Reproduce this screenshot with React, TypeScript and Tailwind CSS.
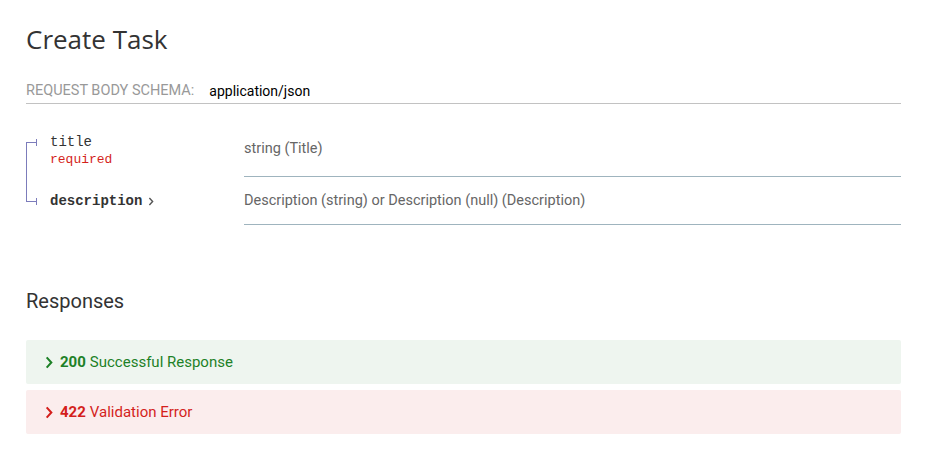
const fields = [
  { name: "title", required: true, type: "string (Title)", expandable: false, tick: 14 },
  {
    name: "description",
    required: false,
    type: "Description (string) or Description (null) (Description)",
    expandable: true,
    tick: 24,
  },
];

const responses = [
  { code: "200", label: "Successful Response", tone: "text-[#1d8127] bg-[#eef5ef]" },
  { code: "422", label: "Validation Error", tone: "text-[#d41f1c] bg-[#fbeded]" },
];

const Chevron = ({ className }: { className?: string }) => (
  <svg viewBox="0 0 8 14" className={className} fill="none" stroke="currentColor" strokeWidth={2.2}>
    <polyline points="1.5,1.5 6.5,7 1.5,12.5" />
  </svg>
);

const Connector = ({ first, last, tick }: { first: boolean; last: boolean; tick: number }) => (
  <span className="relative inline-block w-[24px] self-stretch shrink-0">
    {/* tree line, cut at the first and last row */}
    <span
      className="absolute left-0 w-px bg-[#7c7cbb]"
      style={{ top: first ? tick : 0, ...(last ? { height: tick + 1 } : { bottom: 0 }) }}
    />
    <span className="absolute left-0 w-[10px] h-px bg-[#7c7cbb]" style={{ top: tick }} />
    <span className="absolute left-[10px] w-px h-[7px] bg-[#7c7cbb]" style={{ top: tick - 3 }} />
  </span>
);

export default function App() {
  return (
    <div className="w-[937px] h-[476px] bg-white font-['Roboto',sans-serif] text-[14.5px] text-[#333]">
      <div className="pl-[26px] pr-[36px] pt-[22px]">
        <h2 className="font-['Open_Sans',sans-serif] text-[26px] leading-[34px] text-[#333] font-normal">
          Create Task
        </h2>

        <div className="mt-[24px] flex items-center h-[22px] border-b border-[#c2c2c2] pb-[1px] box-content">
          <span className="text-[#999] uppercase">Request Body schema:</span>
          <span className="ml-[15px] text-[14px] text-black">application/json</span>
        </div>

        <div className="mt-[24px]">
          {fields.map((f, i) => {
            const first = i === 0;
            const last = i === fields.length - 1;
            return (
              <div key={f.name} className="flex">
                <div className="w-[218px] shrink-0 flex">
                  <Connector first={first} last={last} tick={f.tick} />
                  <div className={`flex flex-col ${first ? "pt-[4px]" : "pt-[14px]"}`}>
                    <span
                      className={`font-['Liberation_Mono',monospace] text-[14px] leading-[20px] text-[#333] flex items-center ${
                        f.expandable ? "font-bold" : ""
                      }`}
                    >
                      {f.name}
                      {f.expandable && <Chevron className="ml-[6px] w-[6px] h-[9px] text-[#555]" />}
                    </span>
                    {f.required && (
                      <span className="font-['Liberation_Mono',monospace] text-[13px] leading-[16px] text-[#d41f1c]">
                        required
                      </span>
                    )}
                  </div>
                </div>
                <div
                  className={`flex-1 border-b border-[#9fb4be] text-[#666] leading-[20px] ${
                    first ? "h-[49px] pt-[11px]" : "h-[48px] pt-[14px]"
                  }`}
                >
                  {f.type}
                </div>
              </div>
            );
          })}
        </div>

        <h3 className="mt-[63px] text-[20px] leading-[26px] text-[#333] font-normal">Responses</h3>

        <div className="mt-[26px] flex flex-col gap-[6px]">
          {responses.map((r) => (
            <div key={r.code} className={`h-[44px] rounded-[2px] flex items-center pl-[19px] text-[15px] ${r.tone}`}>
              <Chevron className="w-[8px] h-[13px] mr-[7px]" />
              <strong className="font-bold mr-[4px]">{r.code}</strong>
              <span>{r.label}</span>
            </div>
          ))}
        </div>
      </div>
    </div>
  );
}
